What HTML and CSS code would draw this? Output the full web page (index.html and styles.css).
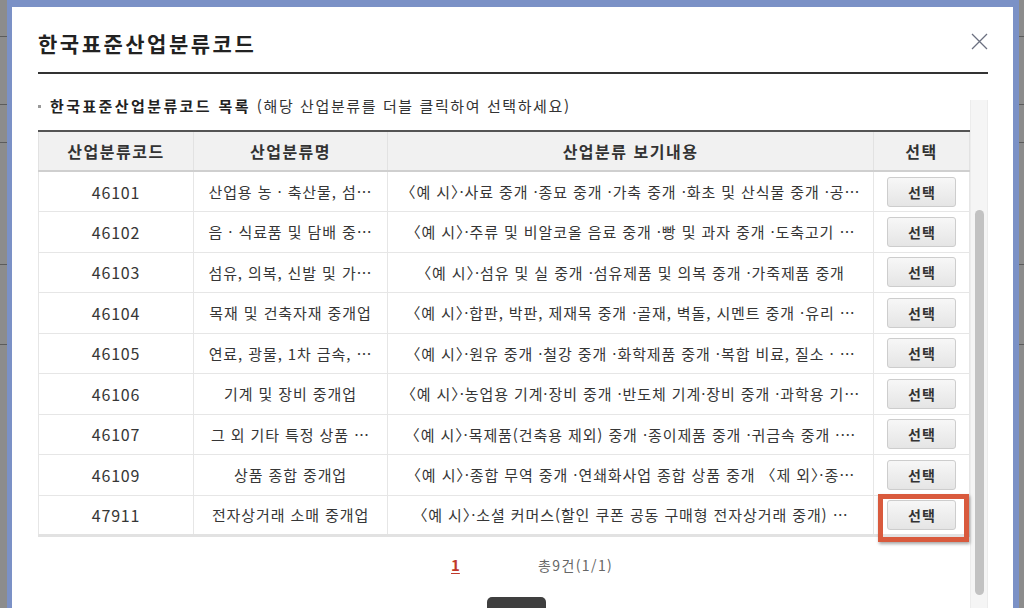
FILE: index.html
```html
<!DOCTYPE html>
<html lang="ko">
<head>
<meta charset="utf-8">
<title>한국표준산업분류코드</title>
<link rel="stylesheet" href="styles.css">
</head>
<body>
<div class="backdrop">
  <div class="frame">
    <div class="modal">
      <header class="modal-head">
        <h1 class="modal-title">한국표준산업분류코드</h1>
        <button class="close" type="button" aria-label="닫기">
          <svg width="17" height="17" viewBox="0 0 17 17"><path d="M1 1 L16 16 M16 1 L1 16" stroke="#6b7080" stroke-width="1.3" fill="none"/></svg>
        </button>
      </header>
      <div class="modal-body">
        <div class="content">
          <p class="subtitle"><span class="bullet"></span><strong>한국표준산업분류코드 목록</strong> (해당 산업분류를 더블 클릭하여 선택하세요)</p>
          <table class="grid">
            <colgroup>
              <col class="c1"><col class="c2"><col class="c3"><col class="c4">
            </colgroup>
            <thead>
              <tr><th>산업분류코드</th><th>산업분류명</th><th>산업분류 보기내용</th><th>선택</th></tr>
            </thead>
            <tbody>
              <tr><td class="code">46101</td><td>산업용 농 · 축산물, 섬…</td><td>〈예 시〉·사료 중개 ·종묘 중개 ·가축 중개 ·화초 및 산식물 중개 ·공…</td><td class="sel"><button class="btn" type="button">선택</button></td></tr>
              <tr><td class="code">46102</td><td>음 · 식료품 및 담배 중…</td><td>〈예 시〉·주류 및 비알코올 음료 중개 ·빵 및 과자 중개 ·도축고기 …</td><td class="sel"><button class="btn" type="button">선택</button></td></tr>
              <tr><td class="code">46103</td><td>섬유, 의복, 신발 및 가…</td><td>〈예 시〉·섬유 및 실 중개 ·섬유제품 및 의복 중개 ·가죽제품 중개</td><td class="sel"><button class="btn" type="button">선택</button></td></tr>
              <tr><td class="code">46104</td><td>목재 및 건축자재 중개업</td><td>〈예 시〉·합판, 박판, 제재목 중개 ·골재, 벽돌, 시멘트 중개 ·유리 …</td><td class="sel"><button class="btn" type="button">선택</button></td></tr>
              <tr><td class="code">46105</td><td>연료, 광물, 1차 금속, …</td><td>〈예 시〉·원유 중개 ·철강 중개 ·화학제품 중개 ·복합 비료, 질소 · …</td><td class="sel"><button class="btn" type="button">선택</button></td></tr>
              <tr><td class="code">46106</td><td>기계 및 장비 중개업</td><td>〈예 시〉·농업용 기계·장비 중개 ·반도체 기계·장비 중개 ·과학용 기…</td><td class="sel"><button class="btn" type="button">선택</button></td></tr>
              <tr><td class="code">46107</td><td>그 외 기타 특정 상품 …</td><td>〈예 시〉·목제품(건축용 제외) 중개 ·종이제품 중개 ·귀금속 중개 ·…</td><td class="sel"><button class="btn" type="button">선택</button></td></tr>
              <tr><td class="code">46109</td><td>상품 종합 중개업</td><td>〈예 시〉·종합 무역 중개 ·연쇄화사업 종합 상품 중개 〈제 외〉·종…</td><td class="sel"><button class="btn" type="button">선택</button></td></tr>
              <tr><td class="code">47911</td><td>전자상거래 소매 중개업</td><td>〈예 시〉·소셜 커머스(할인 쿠폰 공동 구매형 전자상거래 중개) …</td><td class="sel marked"><button class="btn" type="button">선택</button><span class="highlight"></span></td></tr>
            </tbody>
          </table>
          <div class="paging"><a class="page-cur" href="#">1</a><span class="total">총9건(1/1)</span></div>
          <div class="foot-btn"></div>
        </div>
        <div class="scrollbar"><div class="thumb"></div></div>
      </div>
    </div>
  </div>
</div>
</body>
</html>
```
FILE: styles.css
```css
* { box-sizing: border-box; }
html, body { margin: 0; padding: 0; }
body {
  width: 1024px;
  height: 608px;
  overflow: hidden;
  font-family: "Noto Sans CJK KR", "Noto Sans", sans-serif;
  color: #333;
  background-color: #8c8c8c;
  background-image:
    linear-gradient(#5c5c5c, #5c5c5c),
    linear-gradient(#5c5c5c, #5c5c5c),
    linear-gradient(#5c5c5c, #5c5c5c),
    linear-gradient(#5c5c5c, #5c5c5c),
    linear-gradient(#5c5c5c, #5c5c5c);
  background-size: 100% 1px;
  background-repeat: no-repeat;
  background-position: 0 36px, 0 104px, 0 142px, 0 264px, 0 344px;
}
.backdrop { height: 608px; }
.frame {
  margin-left: 7px;
  width: 1012px;
  height: 608px;
  padding: 7px 6px 0 5px;
  background: #7b91c6;
}
.modal {
  height: 601px;
  background: #fff;
  padding: 0 25px 0 26px;
  display: flex;
  flex-direction: column;
  overflow: hidden;
}
.modal-head {
  height: 67px;
  padding-top: 22px;
  border-bottom: 2px solid #333;
  display: flex;
  justify-content: space-between;
  align-items: flex-start;
}
.modal-title {
  margin: 0;
  font-size: 21px;
  line-height: 28px;
  font-weight: 700;
  color: #222;
  letter-spacing: 2.5px;
}
.close {
  margin-top: 4px;
  padding: 0;
  border: 0;
  background: none;
  width: 17px;
  height: 17px;
  display: block;
}
.close svg { display: block; }
.modal-body {
  margin-top: 22px;
  flex: 1;
  display: flex;
  gap: 1px;
  min-height: 0;
}
.content {
  width: 931px;
  display: flex;
  flex-direction: column;
}
.subtitle {
  margin: 0 0 14px;
  height: 20px;
  line-height: 20px;
  font-size: 15px;
  color: #333;
  display: flex;
  align-items: center;
  white-space: pre;
  letter-spacing: 1.6px;
}
.subtitle strong { font-weight: 700; color: #222; letter-spacing: 2.4px; }
.bullet {
  width: 3px;
  height: 3px;
  background: #999;
  margin-right: 9px;
  margin-top: 1px;
}
.grid {
  width: 931px;
  border-collapse: collapse;
  table-layout: fixed;
  border-top: 2px solid #555;
  border-bottom: 3px solid #e2e2e2;
}
.c1 { width: 155px; }
.c2 { width: 194px; }
.c3 { width: 486px; }
.c4 { width: 96px; }
.grid th {
  height: 40px;
  background: #f1f1f1;
  border: 1px solid #e2e2e2;
  border-top: 0;
  border-bottom: 2px solid #cfcfcf;
  font-size: 16px;
  font-weight: 700;
  color: #333;
  padding: 0;
  letter-spacing: 1.5px;
}
.grid td {
  height: 40.5px;
  border: 1px solid #e6e6e6;
  font-size: 15px;
  color: #363636;
  text-align: center;
  white-space: nowrap;
  overflow: hidden;
  padding: 0 4px;
  letter-spacing: 0.9px;
}
.grid td.code { font-size: 16px; letter-spacing: 0.8px; }
.grid td.sel { padding: 0; }
.grid td.marked { position: relative; overflow: visible; }
.btn {
  width: 69px;
  height: 30px;
  border: 1px solid #cdcdcd;
  border-radius: 3px;
  background: linear-gradient(#f7f7f7, #e5e5e5);
  font-family: inherit;
  font-size: 14px;
  font-weight: 700;
  color: #333;
  padding: 0 0 0 1px;
  letter-spacing: 1px;
  vertical-align: middle;
}
.highlight {
  position: absolute;
  left: 4px;
  top: -2px;
  width: 91px;
  height: 48px;
  border: 5px solid #d95a3d;
  box-shadow: 1px 2px 3px rgba(0, 0, 0, 0.35);
  pointer-events: none;
}
.paging {
  margin-top: 18px;
  height: 20px;
  line-height: 20px;
  padding-left: 413px;
  display: flex;
  align-items: center;
  font-size: 13px;
}
.page-cur {
  color: #c0392b;
  font-weight: 700;
  font-size: 15px;
  text-decoration: underline;
  text-underline-offset: 2px;
  width: 9px;
}
.total {
  margin-left: 78px;
  color: #666;
  font-size: 14px;
  letter-spacing: 1.4px;
}
.foot-btn {
  margin-top: 22px;
  margin-left: 449px;
  width: 59px;
  height: 30px;
  background: #3f3f3f;
  border-radius: 5px 5px 0 0;
  flex-shrink: 0;
}
.scrollbar {
  width: 18px;
  margin-top: 4px;
  background: #f5f5f5;
  border-left: 1px solid #ececec;
  border-right: 1px solid #ececec;
  padding: 110px 4px 0 4px;
}
.thumb {
  width: 9px;
  height: 385px;
  border-radius: 5px;
  background: #c2c2c2;
}
```
